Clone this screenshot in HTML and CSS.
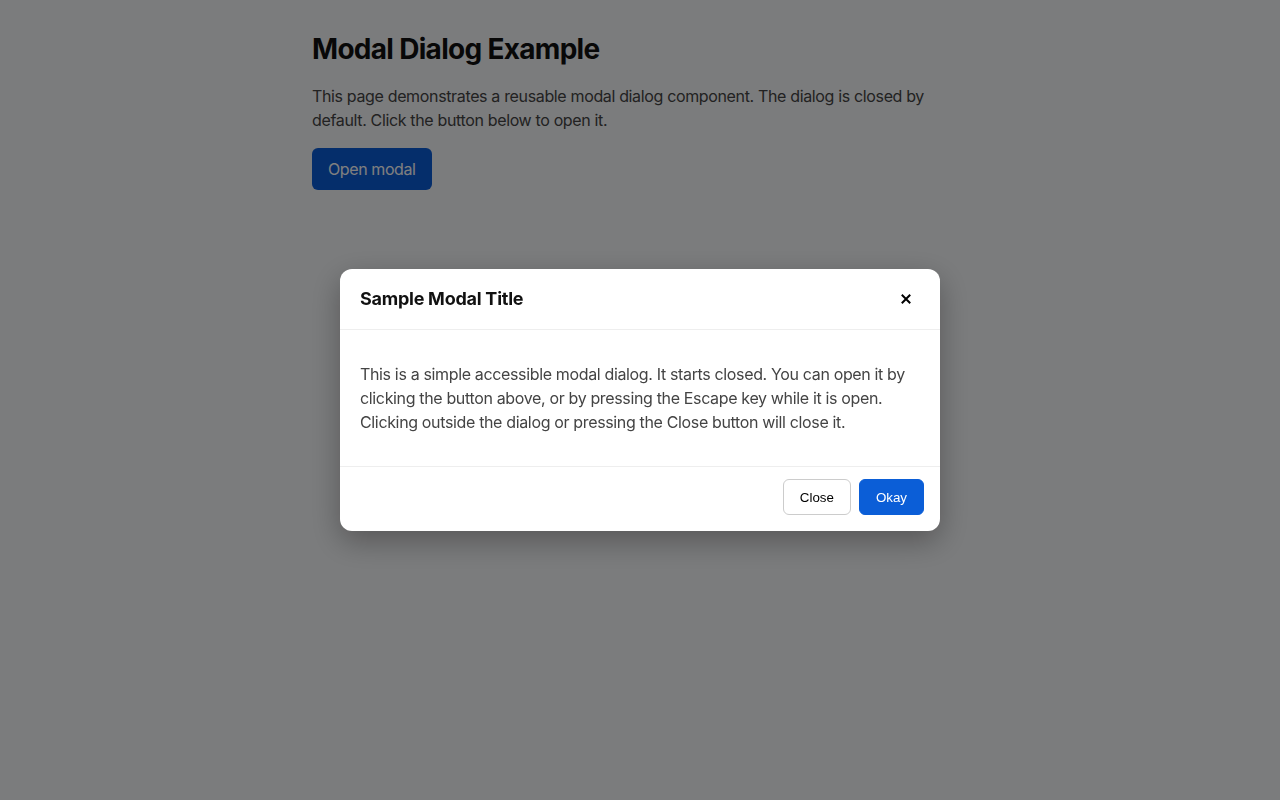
FILE: index.html
```html
<!DOCTYPE html>
<html lang="en">
<head>
  <meta charset="UTF-8">
  <title>Modal Dialog Example</title>
  <link rel="stylesheet" href="styles.css">
</head>
<body>

<main class="page">
  <h1>Modal Dialog Example</h1>
  <p>This page demonstrates a reusable modal dialog component. The dialog is closed by default. Click the button below to open it.</p>
  <button class="open-button" type="button">Open modal</button>
</main>

<div class="overlay">
  <div class="modal" role="dialog" aria-modal="true" aria-labelledby="modalTitle">
    <div class="modal-header">
      <h2 id="modalTitle">Sample Modal Title</h2>
      <button class="icon-close" type="button" aria-label="Close">
        <svg width="10" height="10" viewBox="0 0 10 10">
          <path d="M1.5 1.5 L8.5 8.5 M8.5 1.5 L1.5 8.5" stroke="#000" stroke-width="2" stroke-linecap="square"/>
        </svg>
      </button>
    </div>
    <div class="modal-body">
      <p>This is a simple accessible modal dialog. It starts closed. You can open it by clicking the button above, or by pressing the Escape key while it is open. Clicking outside the dialog or pressing the Close button will close it.</p>
    </div>
    <div class="modal-footer">
      <button class="btn btn-secondary" type="button">Close</button>
      <button class="btn btn-primary" type="button">Okay</button>
    </div>
  </div>
</div>

</body>
</html>
```

FILE: styles.css
```css
body {
  margin: 0;
  font-family: Inter, "Noto Sans", sans-serif;
  background: #f7f8fa;
  color: #222;
  height: 800px;
}

.page {
  max-width: 656px;
  margin: 0 auto;
  padding: 32px 0;
}

.page h1 {
  font-size: 28px;
  font-weight: 700;
  margin: 0 0 18px;
  color: #111;
  letter-spacing: -0.7px;
}

.page p {
  font-size: 16px;
  line-height: 24px;
  margin: 0 0 16px;
  color: #444;
  letter-spacing: -0.35px;
}

.open-button {
  font-family: Inter, "Noto Sans", sans-serif;
  font-size: 16px;
  letter-spacing: -0.4px;
  background: #0b5cd6;
  color: #fff;
  border: none;
  border-radius: 6px;
  padding: 0 16px;
  height: 42px;
  min-width: 119px;
  white-space: nowrap;
  cursor: pointer;
}

.overlay {
  position: fixed;
  inset: 0;
  background: rgba(0, 0, 0, 0.5);
  display: flex;
  justify-content: center;
  align-items: flex-start;
  padding-top: 269px;
}

.modal {
  width: 600px;
  background: #fff;
  border-radius: 12px;
  box-shadow: 0 10px 30px rgba(0, 0, 0, 0.3);
}

.modal-header {
  height: 60px;
  padding: 0 20px;
  display: flex;
  align-items: center;
  justify-content: space-between;
  border-bottom: 1px solid #eee;
}

.modal-header h2 {
  font-size: 18px;
  font-weight: 700;
  margin: 0 0 1px;
  color: #111;
  letter-spacing: -0.25px;
}

.icon-close {
  background: none;
  border: none;
  padding: 4px;
  margin-right: 5px;
  display: flex;
  cursor: pointer;
}

.modal-body {
  padding: 16px 20px;
}

.modal-body p {
  font-size: 16px;
  line-height: 24px;
  margin: 16px 0;
  color: #444;
  letter-spacing: -0.35px;
}

.modal-footer {
  border-top: 1px solid #eee;
  padding: 12px 16px 16px;
  display: flex;
  justify-content: flex-end;
  gap: 8px;
}

.btn {
  font-family: "Liberation Sans", Arial, sans-serif;
  font-size: 13.33px;
  height: 36px;
  padding: 0 16px;
  border-radius: 6px;
  cursor: pointer;
}

.btn-secondary {
  background: #fff;
  border: 1px solid #ccc;
  color: #000;
}

.btn-primary {
  background: #0b5ed7;
  border: 1px solid #0b5ed7;
  color: #fff;
}
```
